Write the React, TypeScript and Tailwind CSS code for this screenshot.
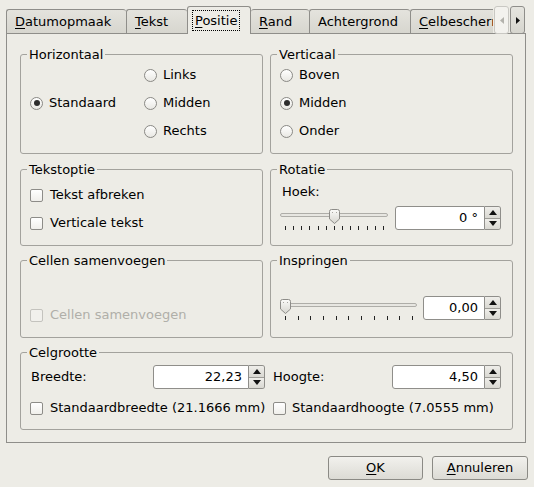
import type { ReactNode } from 'react';

const Radio = ({ checked = false }: { checked?: boolean }) => (
  <span className="w-[13px] h-[13px] shrink-0 rounded-full border border-[#8a8985] bg-gradient-to-b from-white to-[#e9e8e3] flex items-center justify-center">
    {checked && <span className="w-[6px] h-[6px] rounded-full bg-[#2d2d2d]" />}
  </span>
);

const Check = ({ disabled = false }: { disabled?: boolean }) => (
  <span
    className={`w-[13px] h-[13px] shrink-0 rounded-[2px] border ${
      disabled ? 'border-[#c4c3be] bg-[#f1f0ec]' : 'border-[#8d8c88] bg-gradient-to-b from-white to-[#f0efeb]'
    }`}
  />
);

const Group = ({ title, className, children }: { title: string; className: string; children: ReactNode }) => (
  <fieldset className={`m-0 p-0 min-w-0 border border-[#a3a29d] rounded-[3px] ${className}`}>
    <legend className="ml-[6px] px-[2px] leading-[13px]">{title}</legend>
    {children}
  </fieldset>
);

const SpinArrow = ({ up }: { up: boolean }) => (
  <svg width="8" height="5" viewBox="0 0 8 5">
    <path d={up ? 'M0 5 L4 0 L8 5 Z' : 'M0 0 L8 0 L4 5 Z'} fill="#111" />
  </svg>
);

const Spin = ({ value, entry }: { value: string; entry: string }) => (
  <div className="flex h-[24px]">
    <div className={`${entry} h-full bg-white border border-[#8f8e8a] rounded-l-[3px] flex items-center justify-end pr-[6px]`}>
      {value}
    </div>
    <div className="w-[16px] h-full flex flex-col border border-l-0 border-[#8f8e8a] rounded-r-[3px] overflow-hidden">
      <div className="flex-1 flex items-center justify-center bg-gradient-to-b from-[#efeeea] to-[#d9d8d2] border-b border-[#9d9c97]">
        <SpinArrow up />
      </div>
      <div className="flex-1 flex items-center justify-center bg-gradient-to-b from-[#efeeea] to-[#d9d8d2]">
        <SpinArrow up={false} />
      </div>
    </div>
  </div>
);

const Handle = ({ left }: { left: string }) => (
  <svg className={`absolute top-[3px] ${left}`} width="11" height="15" viewBox="0 0 11 15">
    <defs>
      <linearGradient id="hg" x1="0" y1="0" x2="0" y2="1">
        <stop offset="0" stopColor="#fbfbf9" />
        <stop offset="1" stopColor="#d6d5cf" />
      </linearGradient>
    </defs>
    <path d="M0.5 2.5 Q0.5 0.5 2.5 0.5 H8.5 Q10.5 0.5 10.5 2.5 V10 L5.5 14.5 L0.5 10 Z" fill="url(#hg)" stroke="#8d8c88" />
    <rect x="3" y="3" width="1" height="1" fill="#a9a8a3" />
    <rect x="7" y="3" width="1" height="1" fill="#a9a8a3" />
  </svg>
);

const Slider = ({ width, left, ticks }: { width: string; left: string; ticks: number }) => (
  <div className={`relative h-[26px] shrink-0 ${width}`}>
    <div className="absolute left-0 right-0 top-[7px] h-[4px] rounded-full border border-[#aeada8] bg-[#e7e6e1]" />
    <Handle left={left} />
    <div className="absolute top-[20px] left-[5px] right-[4px] flex justify-between">
      {Array.from({ length: ticks }).map((_, i) => (
        <span key={i} className="w-px h-[4px] bg-[#222]" />
      ))}
    </div>
  </div>
);

const Tab = ({ children, className }: { children: ReactNode; className: string }) => (
  <div
    className={`h-[24px] shrink-0 border-t border-[#8f8e8a] rounded-t-[3px] bg-gradient-to-b from-[#e4e3dd] to-[#d7d6cf] flex items-center pl-[8px] whitespace-nowrap overflow-hidden ${className}`}
  >
    {children}
  </div>
);

export default function App() {
  return (
    <div className="w-[534px] h-[487px] bg-[#edece6] text-black text-[13px] font-['DejaVu_Sans',sans-serif] overflow-hidden">
      <div className="flex items-end h-[33px] pt-[6px] pl-[6px]">
        <div className="flex items-end w-[487px] h-[27px]">
          <Tab className="w-[120px] border-l">
            <span><u className="underline-offset-2">D</u>atumopmaak</span>
          </Tab>
          <Tab className="w-[61px] border-l">
            <span><u className="underline-offset-2">T</u>ekst</span>
          </Tab>
          <div className="relative z-10 -mb-px w-[64px] h-[28px] shrink-0 bg-[#edece6] border-t border-l border-r border-[#8f8e8a] rounded-t-[3px] pt-[3px] pl-[4px]">
            <span className="inline-block px-[2px] leading-[19px] border border-dotted border-black">
              <u className="underline-offset-2">P</u>ositie
            </span>
          </div>
          <Tab className="w-[58px]">
            <span><u className="underline-offset-2">R</u>and</span>
          </Tab>
          <Tab className="w-[101px] border-l">
            <span>Achtergrond</span>
          </Tab>
          <Tab className="w-[83px] border-l rounded-tr-none">
            <span><u className="underline-offset-2">C</u>elbescherming</span>
          </Tab>
        </div>
        <div className="relative z-10 -mb-px ml-px w-[15px] h-[28px] rounded-[3px] border border-[#c9c8c3] bg-[#f3f2ee] flex items-center justify-center">
          <svg width="4" height="7" viewBox="0 0 4 7">
            <path d="M4 0 L0 3.5 L4 7 Z" fill="#b3b2ac" />
          </svg>
        </div>
        <div className="relative z-10 -mb-px ml-px w-[15px] h-[28px] rounded-[3px] border border-[#8f8e8a] bg-gradient-to-b from-[#e6e5df] to-[#d6d5ce] flex items-center justify-center">
          <svg width="4" height="7" viewBox="0 0 4 7">
            <path d="M0 0 L4 3.5 L0 7 Z" fill="#111" />
          </svg>
        </div>
      </div>

      <div className="ml-[6px] w-[520px] h-[410px] border border-[#8f8e8a] pt-[14px] pl-[13px]">
        <div className="flex gap-[7px]">
          <Group title="Horizontaal" className="w-[243px] h-[106px]">
            <div className="flex pl-[9px]">
              <div className="w-[114px] h-[84px] flex items-center gap-[6px]">
                <Radio checked />
                <span>Standaard</span>
              </div>
              <div className="flex flex-col">
                {['Links', 'Midden', 'Rechts'].map((t) => (
                  <div key={t} className="h-[28px] flex items-center gap-[6px]">
                    <Radio />
                    <span>{t}</span>
                  </div>
                ))}
              </div>
            </div>
          </Group>
          <Group title="Verticaal" className="w-[243px] h-[106px]">
            <div className="flex flex-col pl-[9px]">
              {['Boven', 'Midden', 'Onder'].map((t) => (
                <div key={t} className="h-[28px] flex items-center gap-[6px]">
                  <Radio checked={t === 'Midden'} />
                  <span>{t}</span>
                </div>
              ))}
            </div>
          </Group>
        </div>

        <div className="flex gap-[7px] mt-[9px]">
          <Group title="Tekstoptie" className="w-[243px] h-[83px]">
            <div className="flex flex-col pl-[9px] pt-[5px]">
              {['Tekst afbreken', 'Verticale tekst'].map((t) => (
                <div key={t} className="h-[28px] flex items-center gap-[7px]">
                  <Check />
                  <span>{t}</span>
                </div>
              ))}
            </div>
          </Group>
          <Group title="Rotatie" className="w-[243px] h-[83px]">
            <div className="flex flex-col pl-[9px] pt-[6px]">
              <div className="h-[20px] flex items-center pl-[2px]">Hoek:</div>
              <div className="flex mt-[4px] gap-[7px]">
                <Slider width="w-[108px]" left="left-[49px]" ticks={13} />
                <Spin value="0 °" entry="w-[90px]" />
              </div>
            </div>
          </Group>
        </div>

        <div className="flex gap-[7px] mt-[8px]">
          <Group title="Cellen samenvoegen" className="w-[243px] h-[84px]">
            <div className="pl-[9px] pt-[38px]">
              <div className="h-[20px] flex items-center gap-[7px] text-[#b0afa9]">
                <Check disabled />
                <span>Cellen samenvoegen</span>
              </div>
            </div>
          </Group>
          <Group title="Inspringen" className="w-[243px] h-[84px]">
            <div className="flex pl-[9px] pt-[29px] gap-[6px]">
              <Slider width="w-[137px]" left="left-0" ticks={11} />
              <Spin value="0,00" entry="w-[62px]" />
            </div>
          </Group>
        </div>

        <Group title="Celgrootte" className="mt-[8px] w-[493px] h-[84px]">
          <div className="pl-[9px] pt-[6px]">
            <div className="flex">
              <div className="w-[235px] flex items-center justify-between">
                <span className="pl-px">Breedte:</span>
                <Spin value="22,23" entry="w-[96px]" />
              </div>
              <div className="ml-[8px] w-[228px] flex items-center justify-between">
                <span>Hoogte:</span>
                <Spin value="4,50" entry="w-[93px]" />
              </div>
            </div>
            <div className="flex mt-[9px] h-[20px]">
              <div className="w-[243px] flex items-center gap-[7px]">
                <Check />
                <span>Standaardbreedte (21.1666 mm)</span>
              </div>
              <div className="flex items-center gap-[6px]">
                <Check />
                <span>Standaardhoogte (7.0555 mm)</span>
              </div>
            </div>
          </div>
        </Group>
      </div>

      <div className="flex justify-end gap-[9px] pr-[6px] mt-[13px]">
        <button className="w-[95px] h-[24px] rounded-[3px] border border-[#8b8a85] bg-gradient-to-b from-[#f2f1ed] to-[#dcdbd5] flex items-center justify-center">
          <span><u className="underline-offset-2">O</u>K</span>
        </button>
        <button className="w-[96px] h-[24px] rounded-[3px] border border-[#8b8a85] bg-gradient-to-b from-[#f2f1ed] to-[#dcdbd5] flex items-center justify-center">
          <span><u className="underline-offset-2">A</u>nnuleren</span>
        </button>
      </div>
    </div>
  );
}
